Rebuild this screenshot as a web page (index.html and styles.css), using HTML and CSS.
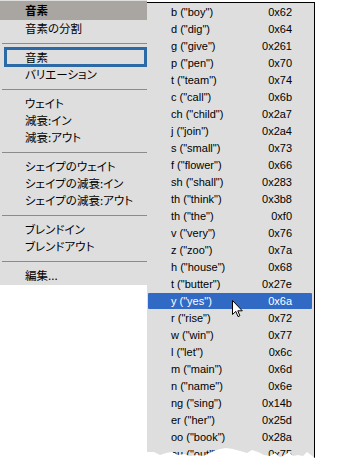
FILE: index.html
```html
<!DOCTYPE html>
<html lang="ja">
<head>
  <meta charset="UTF-8">
  <meta name="viewport" content="width=device-width, initial-scale=1.0">
  <title>音素メニュー</title>
  <link rel="stylesheet" href="styles.css">
</head>
<body>
  <div class="screen">
    <div class="menu">
      <div class="item head">音素</div>
      <div class="item">音素の分割</div>
      <div class="sep"></div>
      <div class="item focus">音素</div>
      <div class="item">バリエーション</div>
      <div class="sep"></div>
      <div class="item">ウェイト</div>
      <div class="item">減衰:イン</div>
      <div class="item">減衰:アウト</div>
      <div class="sep"></div>
      <div class="item">シェイプのウェイト</div>
      <div class="item">シェイプの減衰:イン</div>
      <div class="item">シェイプの減衰:アウト</div>
      <div class="sep"></div>
      <div class="item">ブレンドイン</div>
      <div class="item">ブレンドアウト</div>
      <div class="sep"></div>
      <div class="item">編集...</div>
    </div>

    <div class="submenu">
      <div class="row"><span>b ("boy")</span><span>0x62</span></div>
      <div class="row"><span>d ("dig")</span><span>0x64</span></div>
      <div class="row"><span>g ("give")</span><span>0x261</span></div>
      <div class="row"><span>p ("pen")</span><span>0x70</span></div>
      <div class="row"><span>t ("team")</span><span>0x74</span></div>
      <div class="row"><span>c ("call")</span><span>0x6b</span></div>
      <div class="row"><span>ch ("child")</span><span>0x2a7</span></div>
      <div class="row"><span>j ("join")</span><span>0x2a4</span></div>
      <div class="row"><span>s ("small")</span><span>0x73</span></div>
      <div class="row"><span>f ("flower")</span><span>0x66</span></div>
      <div class="row"><span>sh ("shall")</span><span>0x283</span></div>
      <div class="row"><span>th ("think")</span><span>0x3b8</span></div>
      <div class="row"><span>th ("the")</span><span>0xf0</span></div>
      <div class="row"><span>v ("very")</span><span>0x76</span></div>
      <div class="row"><span>z ("zoo")</span><span>0x7a</span></div>
      <div class="row"><span>h ("house")</span><span>0x68</span></div>
      <div class="row"><span>t ("butter")</span><span>0x27e</span></div>
      <div class="row selected"><span>y ("yes")</span><span>0x6a</span></div>
      <div class="row"><span>r ("rise")</span><span>0x72</span></div>
      <div class="row"><span>w ("win")</span><span>0x77</span></div>
      <div class="row"><span>l ("let")</span><span>0x6c</span></div>
      <div class="row"><span>m ("main")</span><span>0x6d</span></div>
      <div class="row"><span>n ("name")</span><span>0x6e</span></div>
      <div class="row"><span>ng ("sing")</span><span>0x14b</span></div>
      <div class="row"><span>er ("her")</span><span>0x25d</span></div>
      <div class="row"><span>oo ("book")</span><span>0x28a</span></div>
      <div class="row"><span>ou ("out")</span><span>0x75</span></div>

      <!-- mouse pointer over the selected row -->
      <svg class="cursor" width="12" height="18" viewBox="0 0 12 18">
        <path d="M0.5 0.5 L0.5 14.5 L3.8 11.4 L6 16.6 L7.9 15.8 L5.8 10.8 L10.3 10.8 Z" fill="#fff" stroke="#000" stroke-width="1" stroke-linejoin="round"/>
      </svg>
    </div>
  </div>
</body>
</html>
```

FILE: styles.css
```css
body {
  margin: 0;
  background: #fff;
  font-family: "Liberation Sans", Arial, sans-serif;
  font-size: 11px;
  color: #000;
}

.screen {
  display: flex;
  align-items: flex-start;
}

/* left menu */

.menu {
  width: 147px;
  padding-top: 1px;
  padding-bottom: 1px;
  background: #dedede;
  font-family: "Noto Sans CJK JP", "Liberation Sans", sans-serif;
  font-size: 11.5px;
  font-feature-settings: "palt";
}

.item {
  height: 17px;
  line-height: 17px;
  padding-left: 25px;
  white-space: nowrap;
}

.item.head {
  height: 19px;
  line-height: 19px;
  background: #a9a6a2;
  font-weight: bold;
}

.item.focus {
  position: relative;
}

.item.focus::after {
  content: "";
  position: absolute;
  left: 4px;
  right: 0;
  top: -2px;
  bottom: -1px;
  border: 3px solid #2b6aa6;
}

.sep {
  margin: 6px 0 5px 2px;
  border-top: 1px solid #8b8b8b;
}

/* submenu */

.submenu {
  position: relative;
  width: 164px;
  margin-top: 2px;
  padding: 1px 2px 0 1px;
  background: #dedede;
  border-top: 1px solid #000;
  border-right: 1px solid #000;
  clip-path: polygon(0 0, 100% 0, 100% 456px, 164px 453px, 160px 450px, 156px 454px, 151px 453px,
    146px 454px, 142px 450px, 138px 453px, 133px 455px, 128px 451px, 123px 454px, 117px 453px,
    111px 450px, 105px 448px, 100px 451px, 93px 449px, 86px 447px, 79px 446px, 73px 447px,
    67px 449px, 61px 452px, 56px 454px, 50px 453px, 43px 454px, 37px 452px, 31px 453px,
    25px 450px, 19px 451px, 13px 453px, 7px 450px, 0 450px);
}

.row {
  display: flex;
  justify-content: space-between;
  height: 16px;
  line-height: 16px;
  margin-bottom: 1px;
  padding: 0 20px 0 23px;
  white-space: nowrap;
}

.row.selected {
  background: #316ac5;
  color: #fff;
  border-radius: 1px;
}

.cursor {
  position: absolute;
  left: 85px;
  top: 297px;
}
```
